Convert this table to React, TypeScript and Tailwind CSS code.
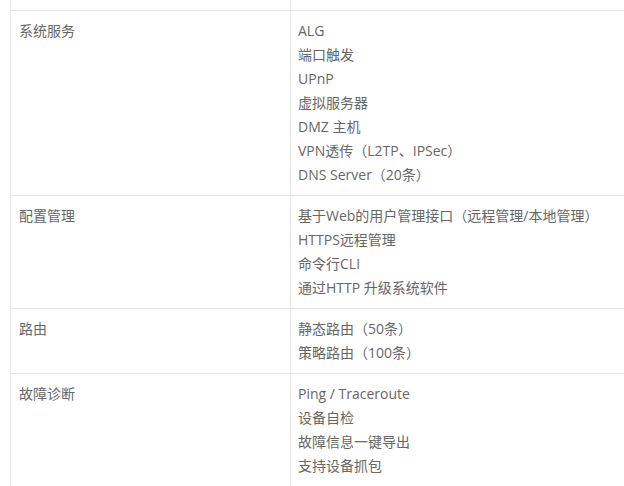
const ROWS: { name: string; items: string[] }[] = [
  {
    name: "系统服务",
    items: [
      "ALG",
      "端口触发",
      "UPnP",
      "虚拟服务器",
      "DMZ 主机",
      "VPN透传（L2TP、IPSec）",
      "DNS Server（20条）",
    ],
  },
  {
    name: "配置管理",
    items: [
      "基于Web的用户管理接口（远程管理/本地管理）",
      "HTTPS远程管理",
      "命令行CLI",
      "通过HTTP 升级系统软件",
    ],
  },
  {
    name: "路由",
    items: ["静态路由（50条）", "策略路由（100条）"],
  },
  {
    name: "故障诊断",
    items: ["Ping / Traceroute", "设备自检", "故障信息一键导出", "支持设备抓包"],
  },
];

export default function App() {
  return (
    <div className="h-[486px] w-[624px] overflow-hidden bg-white font-['Open_Sans','Noto_Sans_CJK_SC',sans-serif] text-[14px] leading-6 text-[#666]">
      <div className="ml-[10px] w-[700px] border-l border-[#e6e6e6]">
        {/* tail of the row above, scrolled out of view */}
        <div className="flex h-[11px] border-b border-[#e6e6e6]">
          <div className="w-[280px] border-r border-[#e6e6e6]" />
          <div className="flex-1" />
        </div>
        {ROWS.map((row) => (
          <div key={row.name} className="flex border-b border-[#e6e6e6]">
            <div className="w-[280px] border-r border-[#e6e6e6] px-2 py-2">{row.name}</div>
            <div className="flex-1 py-2 pl-[7px]">
              {row.items.map((item) => (
                <div key={item}>{item}</div>
              ))}
            </div>
          </div>
        ))}
      </div>
    </div>
  );
}
